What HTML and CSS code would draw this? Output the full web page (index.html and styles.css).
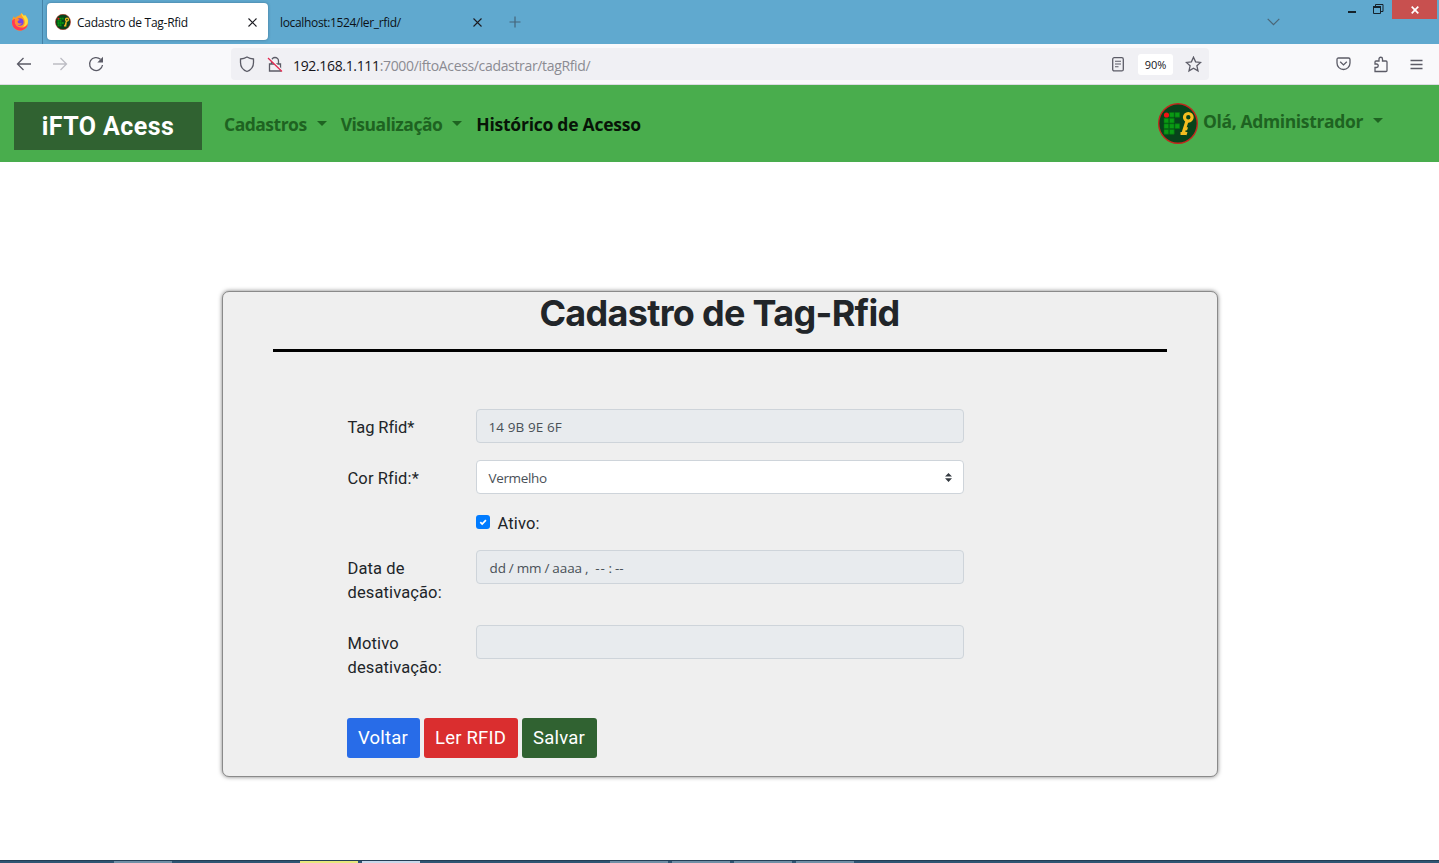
FILE: index.html
```html
<!DOCTYPE html>
<html lang="pt-BR">
<head>
<meta charset="utf-8">
<title>Cadastro de Tag-Rfid</title>
<link rel="stylesheet" href="styles.css">
</head>
<body>
<svg class="defs" width="0" height="0">
  <defs>
    <symbol id="logo" viewBox="0 0 40 41">
      <ellipse cx="20" cy="20.500" rx="19.300" ry="19.800" fill="#07431b" stroke="#c3261d" stroke-width="1.400"/>
      <path fill="#0a9a14" stroke="#057010" stroke-width=".6" d="M11.500 9.500h4.700v4.700h-4.700zM17 9.500h4.700v4.700H17zM6 15.200h4.700v4.700H6zM11.500 15.200h4.700v4.700h-4.700zM6 20.800h4.700v4.700H6zM11.500 20.800h4.700v4.700h-4.700zM17 20.800h4.700v4.700H17zM6 26.500h4.700v4.700H6zM11.500 26.500h4.700v4.700h-4.700z"/>
      <circle cx="8.500" cy="12" r="2.600" fill="#f01313"/>
      <circle cx="30.300" cy="14.300" r="3.800" fill="none" stroke="#f5bd20" stroke-width="3.200"/>
      <path fill="none" stroke="#f5bd20" stroke-width="3.200" d="M29 18 24.800 31M26.500 25l3 1M25 29.500l4 1.300M22.500 30.500h5"/>
    </symbol>
  </defs>
</svg>
<header class="tabs">
  <div class="pin">
    <svg width="18" height="18" viewBox="0 0 18 18">
      <path fill="#ff9a28" d="M9 2c1-1 1.300-1.500 1.500-2 1 1 1.500 2 2.500 3l1-1c2 2 3 4.500 3 7.500A8 8 0 0 1 1 10c0-3 .5-5 2-7 0 1 .5 1.500 1 2 1.500-1.500 3-2 5-3z"/>
      <path fill="#ff3a55" d="M1 8c-.5 5 3 9.500 8 9.500 4 0 7-2.500 7.700-6-2 2.500-4 3.500-7 3C5.500 14 3 11 4 6 2.500 6 1.500 7 1 8z"/>
      <path fill="#ffdb38" d="M10.500 0C10 3 12.500 4 13.500 7c1 3 0 5-1.500 7 4-1 5.500-4 4.800-7.500C16.300 4.500 15 3 14 2l-1 1c-1-1-1.700-2-2.500-3z"/>
      <circle cx="8.800" cy="9" r="3.800" fill="#7542e5"/>
      <path fill="#ff8a35" d="M4 6c2-.7 3.500 0 5 1-1 .5-2 .6-2.400 1.500C6.500 10.500 9 11 11 10c-1 2.300-5 3-6.500.5z"/>
    </svg>
  </div>
  <div class="tab active">
    <svg class="fav" width="16" height="16"><use href="#logo"/></svg>
    <span class="tab-title">Cadastro de Tag-Rfid</span>
    <svg class="x" width="9" height="9" viewBox="0 0 9 9"><path d="m.5.500 8 8m0-8-8 8"/></svg>
  </div>
  <div class="tab">
    <span class="tab-title tight">localhost:1524/ler_rfid/</span>
    <svg class="x" width="9" height="9" viewBox="0 0 9 9"><path d="m.5.500 8 8m0-8-8 8"/></svg>
  </div>
  <svg class="plus" width="12" height="12" viewBox="0 0 12 12"><path d="M6 .5v11M.5 6h11"/></svg>
  <svg class="alltabs" width="13" height="8" viewBox="0 0 13 8"><path d="m.7.800 5.800 5.800L12.300.800"/></svg>
  <div class="winctl">
    <svg width="40" height="19" viewBox="0 0 40 19"><path fill="#16232c" d="M1 11h8v2H1z"/><path fill="none" stroke="#16232c" d="M28.500 6.500V4.500h7.500v7h-2"/><path fill="none" stroke="#16232c" d="M26.500 7.500h7v6h-7z"/><path stroke="#16232c" stroke-width="2" d="M26 7h8"/></svg>
    <div class="close"><svg width="8" height="8" viewBox="0 0 8 8"><path stroke="#fff" stroke-width="1.700" d="m.7.700 6.600 6.600m0-6.600L.7 7.300"/></svg></div>
  </div>
</header>
<div class="toolbar">
  <svg class="ic back" width="16" height="16" viewBox="0 0 16 16"><path d="M15 8H1.500M7.500 2l-6 6 6 6"/></svg>
  <svg class="ic fwd" width="16" height="16" viewBox="0 0 16 16"><path d="M1 8h13.500M8.500 2l6 6-6 6"/></svg>
  <svg class="ic reload" width="16" height="16" viewBox="0 0 16 16"><path d="M14.500 9A6.500 6.500 0 1 1 12.500 3.300"/><path fill="#5b5b66" stroke="none" d="M15 .8v5.700H9.300z"/></svg>
  <div class="url">
    <svg class="ic" width="16" height="17" viewBox="0 0 16 17"><path d="M8 1c2 1.200 4 1.800 6.500 2v3.500c0 4-2.500 7.500-6.500 9-4-1.500-6.500-5-6.500-9V3C4 2.800 6 2.200 8 1z"/></svg>
    <svg class="ic lock" width="16" height="17" viewBox="0 0 16 17"><path d="M4.500 8V5a3.500 3.500 0 0 1 7 0v3M2.500 8h11v7h-11z"/><path stroke="#f5f5f8" stroke-width="2" d="m1.500 1.500 14 13.500"/><path class="red" d="m1 2 14 13.500"/></svg>
    <span class="addr"><b>192.168.1.111</b>:7000/iftoAcess/cadastrar/tagRfid/</span>
    <svg class="ic reader" width="12" height="15" viewBox="0 0 12 15"><rect x=".7" y=".7" width="10.600" height="13.200" rx="1.500"/><path d="M3 4.300h6M3 7h6M3 9.700h3.500" stroke-width="1.100"/></svg>
    <span class="zoom">90%</span>
    <svg class="ic star" width="17" height="17" viewBox="0 0 17 17"><path d="m8.500 1.200 2.100 4.600 5.100.600-3.800 3.400 1.100 5.100-4.500-2.600L4 14.900l1.100-5.100-3.800-3.400 5.100-.600z"/></svg>
  </div>
  <div class="tools">
    <svg class="ic" width="15" height="14" viewBox="0 0 15 14"><path d="M2.500 1h10q1.500 0 1.500 1.500V6A6.500 6.500 0 0 1 1 6V2.500Q1 1 2.500 1zM4.200 4.700l3.300 3.200 3.300-3.200"/></svg>
    <svg class="ic" width="15" height="17" viewBox="0 0 15 17"><path d="M2 15.500v-4h1.500a1.700 1.700 0 0 0 0-3.500H2V6q0-1 1-1h3V3a1.700 1.700 0 0 1 3.500 0v2H13q1 0 1 1v8.500q0 1-1 1z"/></svg>
    <svg class="ic" width="13" height="11" viewBox="0 0 13 11"><path d="M.5 1.500h12M.5 5.500h12M.5 9.500h12"/></svg>
  </div>
</div>
<nav class="navbar">
  <a class="brand"><span>iFTO Acess</span></a>
  <a class="link"><span>Cadastros</span><i class="caret"></i></a>
  <a class="link"><span>Visualização</span><i class="caret"></i></a>
  <a class="link current"><span>Histórico de Acesso</span></a>
  <a class="user"><svg width="40" height="41"><use href="#logo"/></svg><span>Olá, Administrador</span><i class="caret"></i></a>
</nav>
<main class="page">
  <section class="card">
    <h1>Cadastro de Tag-Rfid</h1>
    <form class="form">
      <div class="row r1"><label>Tag Rfid*</label><div class="field off code"><span>14 9B 9E 6F</span></div></div>
      <div class="row r2"><label>Cor Rfid:*</label><div class="field"><span>Vermelho</span>
        <svg class="arrows" width="7" height="9" viewBox="0 0 7 9"><path fill="#343a40" d="M0 3.500 3.500 0 7 3.500zM0 5.300h7L3.500 9z"/></svg></div></div>
      <div class="row check"><svg width="14" height="14" viewBox="0 0 14 14"><rect width="14" height="14" rx="3" fill="#007bff"/><path fill="none" stroke="#fff" stroke-width="1.700" d="m4.300 7.200 1.900 1.900 3.700-3.900"/></svg><span>Ativo:</span></div>
      <div class="row r4"><label>Data de<br>desativação:</label><div class="field off date"><span>dd</span><span>/</span><span>mm</span><span>/</span><span>aaaa</span><span>,</span><span class="time">--</span><span>:</span><span>--</span></div></div>
      <div class="row r5"><label>Motivo<br>desativação:</label><div class="field off"></div></div>
      <div class="buttons"><button class="blue">Voltar</button><button class="redb">Ler RFID</button><button class="green">Salvar</button></div>
    </form>
  </section>
</main>
<footer class="taskbar"><i class="dim"></i><i class="yellow"></i><i class="light"></i><i class="dim gap"></i><i class="dim"></i><i class="dim"></i><i class="dim"></i></footer>
</body>
</html>
```
FILE: styles.css
```css
* { box-sizing: border-box; }
html, body { height: 100%; }
body { margin: 0; display: flex; flex-direction: column; overflow: hidden; background: #fff; font-family: "Open Sans", "Noto Sans", sans-serif; color: #212529; }
.defs { position: absolute; }
svg { display: block; flex: none; }
.tabs { height: 44px; flex: none; display: flex; align-items: flex-start; background: #60a9cf; }
.pin { width: 43px; height: 44px; padding: 13px 0 0 11px; border-right: 1px solid #4482a7; }
.tab { display: flex; align-items: center; width: 221px; height: 37px; margin-top: 3px; padding: 0 11px 0 8px; font-size: 12px; color: #0c1116; }
.tab.active { margin-left: 4px; background: #fff; border-radius: 4px; box-shadow: 0 0 3px rgba(20, 50, 80, .45); }
.tab:not(.active) { width: 217px; padding: 0 3px 0 12px; }
.fav { margin-right: 6px; }
.tab-title { padding-top: 2px; white-space: nowrap; letter-spacing: -.26px; }
.tight { letter-spacing: -.34px; }
.x { margin: 1px 0 0 auto; fill: none; stroke: #1c1c22; stroke-width: 1.100; }
.plus { margin: 16px 0 0 24px; fill: none; stroke: #45657a; stroke-width: 1.200; }
.alltabs { margin: 18px 0 0 auto; fill: none; stroke: #4b6677; stroke-width: 1.200; }
.winctl { display: flex; margin-left: 67px; padding-right: 2px; }
.winctl > svg { margin-right: 5px; }
.close { width: 45px; height: 19px; display: grid; place-items: center; background: #c8504f; }
.toolbar { height: 41px; flex: none; display: flex; align-items: center; background: #f9f9fb; border-bottom: 1px solid #dcdce2; padding: 0 16px; }
.ic { fill: none; stroke: #5b5b66; stroke-width: 1.300; }
.fwd { margin-left: 20px; stroke: #bdbdc4; }
.reload { margin-left: 20px; }
.url { width: 978px; height: 32px; margin-left: 127px; padding: 0 7px 0 8px; display: flex; align-items: center; background: #f0f0f4; border-radius: 4px; }
.lock { margin-left: 12px; }
.red { stroke: #e22850; }
.addr { margin-left: 10px; padding-top: 2px; font-size: 14px; letter-spacing: -.34px; color: #8b8b92; white-space: nowrap; }
.addr b { font-weight: 400; color: #15141a; }
.reader { margin-left: auto; }
.zoom { width: 35px; height: 21px; margin: 0 12px 0 14px; background: #fff; border-radius: 3px; font-size: 11px; line-height: 22px; text-align: center; color: #15141a; }
.tools { margin-left: auto; display: flex; align-items: center; gap: 22px; }
.navbar { height: 77px; flex: none; display: flex; align-items: center; background: #49ad4d; padding: 5px 56px 0 14px; font-size: 17.5px; font-weight: 700; letter-spacing: -.5px; color: #1e6321; }
.brand { width: 188px; height: 48px; margin-right: 22px; display: grid; place-items: center; background: #306231; color: #fff; font: 700 25px Roboto, sans-serif; letter-spacing: .45px; }
.link { display: flex; align-items: center; margin-right: 14px; padding-bottom: 4px; white-space: nowrap; }
.caret { border: 5px solid transparent; border-top-color: currentColor; border-bottom: 0; margin: 0 0 2px 10px; }
.current { color: #071407; letter-spacing: -.25px; }
.user { margin-left: auto; display: flex; align-items: center; padding-bottom: 6px; letter-spacing: -.36px; }
.user svg { margin-right: 5px; }
.user span { margin-bottom: 4px; }
.user .caret { margin-bottom: 5px; }
.page { flex: 1; display: flex; justify-content: center; align-items: flex-start; padding-top: 129px; }
.card { width: 996px; height: 486px; border: 1px solid #8a8a8a; border-radius: 7px; background: #efefef; box-shadow: 0 0 4px rgba(0, 0, 0, .5); padding: 0 50px; font-family: Roboto, sans-serif; }
h1 { height: 60px; margin: 0; border-bottom: 3px solid #000; text-align: center; font: 700 36px/43px Inter, sans-serif; letter-spacing: -.7px; }
.form { width: 617px; margin: 57px 0 0 74px; font-size: 16.5px; line-height: 24px; letter-spacing: .12px; }
.row { display: flex; }
.row label { width: 129px; padding: 7px 0 0 1px; }
.r1 label { letter-spacing: -.1px; }
.field { width: 488px; height: 34px; display: flex; align-items: center; justify-content: space-between; padding: 0 11px 0 12px; border: 1px solid #ced4da; border-radius: 4px; background: #fff; font: 13.5px "Open Sans", sans-serif; letter-spacing: -.35px; color: #495057; }
.field span { padding-top: 2px; }
.off { background: #e8ebee; }
.code { letter-spacing: .1px; }
.date { justify-content: flex-start; gap: 3px; padding-left: 13px; letter-spacing: -.1px; }
.time { margin-left: 4px; letter-spacing: .7px; }
.r1, .r2 { height: 51px; }
.check { height: 39px; padding-left: 129px; }
.check svg { margin: 4px 8px 0 0; }
.check span { margin-top: 1px; }
.r4 { height: 75px; }
.r5 { height: 93px; }
.buttons { display: flex; gap: 4px; }
button { height: 40px; border: 0; border-radius: 3px; padding: 0; color: #fff; font: 18.5px Roboto, sans-serif; letter-spacing: .2px; }
.blue { width: 73px; background: #286ce8; }
.redb { width: 94px; background: #da2e2f; }
.green { width: 75px; background: #306231; }
.taskbar { height: 3px; flex: none; display: flex; padding-left: 114px; background: #2e5573; border-top: 1px solid #233e55; }
.taskbar i { width: 58px; height: 2px; margin-right: 4px; }
.dim { background: #6f8fa6; }
.taskbar .yellow { margin-left: 124px; background: #e7e77c; }
.light { background: #c8d8ea; }
.taskbar .gap { margin-left: 186px; }
```
